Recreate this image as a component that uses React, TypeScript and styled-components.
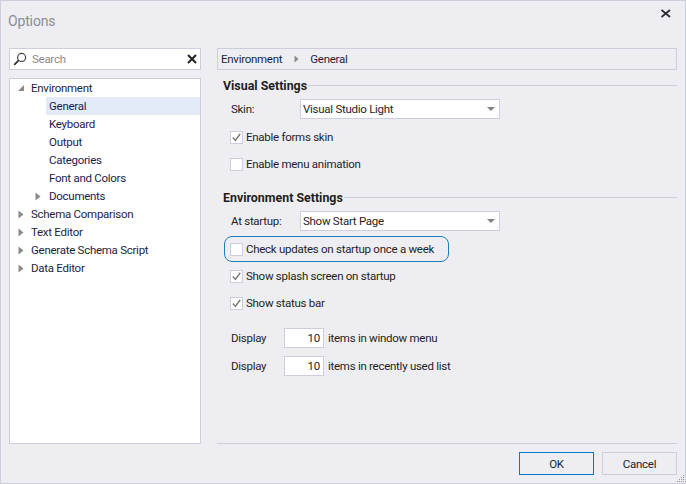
import React from "react";
import styled, { createGlobalStyle } from "styled-components";

const Global = createGlobalStyle`
  html, body { margin: 0; padding: 0; }
  body { width: 686px; height: 484px; overflow: hidden; font-family: Roboto, "Noto Sans", sans-serif; font-size: 11.5px; letter-spacing: -0.27px; color: #1e1e1e; }
`;

const Win = styled.div`
  position: relative;
  box-sizing: border-box;
  width: 686px;
  height: 484px;
  background: #eeeef2;
  border: 1px solid #cccedb;
  display: flex;
  flex-direction: column;
`;
const TitleBar = styled.div`
  height: 47px;
  flex: none;
  display: flex;
  justify-content: space-between;
  padding: 8px 14px 0 7px;
  box-sizing: border-box;
`;
const Title = styled.div`
  font-size: 14px;
  letter-spacing: -0.15px;
  line-height: 18px;
  margin-top: 3px;
  color: #8a8d99;
`;
const CloseBtn = styled.div`
  width: 10px;
  height: 10px;
  display: flex;
`;
const Main = styled.div`
  display: flex;
  flex: 1;
  padding-left: 8px;
  min-height: 0;
`;
const Left = styled.div`
  width: 192px;
  flex: none;
  display: flex;
  flex-direction: column;
  gap: 8px;
`;
const Search = styled.div`
  box-sizing: border-box;
  height: 22px;
  background: #fff;
  border: 1px solid #cccedb;
  display: flex;
  align-items: center;
  padding: 0 3px 0 3px;
`;
const SearchText = styled.div`
  flex: 1;
  margin-left: 5px;
  color: #8a8a8a;
`;
const Tree = styled.div`
  box-sizing: border-box;
  height: 366px;
  background: #fff;
  border: 1px solid #cccedb;
`;
const Row = styled.div<{ $level: number; $selected?: boolean }>`
  height: 18px;
  line-height: 18px;
  display: flex;
  align-items: center;
  box-sizing: border-box;
  color: ${(p) => (p.$level ? "#1b1b50" : "#1e1e3c")};
  margin-left: ${(p) => (p.$level ? 36 : 0)}px;
  padding-left: ${(p) => (p.$level ? 3 : 21)}px;
  background: ${(p) => (p.$selected ? "#e2ebf7" : "transparent")};
  position: relative;
`;
const Arrow = styled.svg<{ $x: number }>`
  position: absolute;
  left: ${(p) => p.$x}px;
  top: 5px;
`;
const Right = styled.div`
  margin-left: 16px;
  width: 460px;
  flex: none;
  display: flex;
  flex-direction: column;
`;
const Crumb = styled.div`
  box-sizing: border-box;
  height: 22px;
  border: 1px solid #cccedb;
  display: flex;
  align-items: center;
  padding-left: 3px;
  color: #1e1e3c;
`;
const CrumbSep = styled.svg`
  margin: 0 11px 0 12px;
`;
const Section = styled.div<{ $mt: number }>`
  display: flex;
  align-items: center;
  height: 16px;
  margin-top: ${(p) => p.$mt}px;
  font-weight: 700;
  font-size: 12.4px;
  letter-spacing: 0;
  color: #1e1e1e;
  padding-left: 6px;
  &::after {
    content: "";
    flex: 1;
    height: 1px;
    background: #cccedb;
    margin-left: 1px;
  }
`;
const FormRow = styled.div`
  display: flex;
  align-items: center;
  padding-left: 14px;
  margin-top: 6px;
`;
const Label = styled.div`
  width: 69px;
  flex: none;
`;
const Combo = styled.div`
  box-sizing: border-box;
  width: 200px;
  height: 20px;
  background: #fff;
  border: 1px solid #cccedb;
  display: flex;
  align-items: center;
  justify-content: space-between;
  padding: 0 4px 0 2px;
`;
const Caret = styled.div`
  width: 0;
  height: 0;
  border-left: 4px solid transparent;
  border-right: 4px solid transparent;
  border-top: 4px solid #808080;
`;
const Box = styled.div`
  box-sizing: border-box;
  width: 13px;
  height: 13px;
  background: #fff;
  border: 1px solid #cccedb;
  flex: none;
  display: flex;
  margin-right: 3px;
`;
const CheckRow = styled(FormRow)<{ $mt: number }>`
  height: 14px;
  margin-top: ${(p) => p.$mt}px;
  padding-left: 13px;
`;
const Highlight = styled.div`
  box-sizing: border-box;
  position: absolute;
  left: 223px;
  top: 235px;
  width: 225px;
  height: 26px;
  border: 1px solid #1c7fb8;
  border-radius: 8px;
`;
const NumRow = styled(FormRow)<{ $mt: number }>`
  height: 20px;
  margin-top: ${(p) => p.$mt}px;
`;
const NumLabel = styled.div`
  width: 53px;
  flex: none;
`;
const Num = styled.div`
  box-sizing: border-box;
  width: 40px;
  height: 20px;
  background: #fff;
  border: 1px solid #cccedb;
  text-align: right;
  line-height: 18px;
  padding-right: 3px;
  margin-right: 4px;
`;
const Footer = styled.div`
  margin-top: auto;
  border-top: 1px solid #cccedb;
  height: 40px;
  box-sizing: border-box;
  display: flex;
  justify-content: flex-end;
  gap: 8px;
  padding-top: 8px;
`;
const Button = styled.div<{ $primary?: boolean }>`
  box-sizing: border-box;
  width: 75px;
  height: 23px;
  border: 1px solid ${(p) => (p.$primary ? "#007acc" : "#cccedb")};
  display: flex;
  align-items: center;
  justify-content: center;
  background: #eeeef2;
`;
const Grip = styled.svg`
  position: absolute;
  right: 0;
  bottom: 0;
`;

const Check = ({ on }: { on?: boolean }) => (
  <Box>
    {on && (
      <svg width="11" height="11" viewBox="0 0 11 11">
        <path d="M1.8 5.6 L4.4 8.4 L9.2 1.8" fill="none" stroke="#7b7b7b" strokeWidth="1.5" />
      </svg>
    )}
  </Box>
);
const Right7 = ({ x }: { x: number }) => (
  <Arrow $x={x} width="6" height="9" viewBox="0 0 6 9">
    <path d="M0.5 0.5 L5.5 4.5 L0.5 8.5 Z" fill="#8a8a8a" />
  </Arrow>
);

export default function App() {
  return (
    <>
      <Global />
      <Win>
        <TitleBar>
          <Title>Options</Title>
          <CloseBtn>
            <svg width="10" height="10" viewBox="0 0 10 10">
              <path d="M0.5 1 L9 8 M9 1 L0.5 8" stroke="#2b2b35" strokeWidth="1.8" fill="none" />
            </svg>
          </CloseBtn>
        </TitleBar>
        <Main>
          <Left>
            <Search>
              <svg width="14" height="14" viewBox="0 0 14 14">
                <circle cx="8.6" cy="5.4" r="4" fill="none" stroke="#444" strokeWidth="1.2" />
                <path d="M5.6 8.4 L1.2 12.8" stroke="#333" strokeWidth="1.8" />
              </svg>
              <SearchText>Search</SearchText>
              <svg width="10" height="10" viewBox="0 0 10 10">
                <path d="M1 1 L9 9 M9 1 L1 9" stroke="#222" strokeWidth="2" fill="none" />
              </svg>
            </Search>
            <Tree>
              <Row $level={0}>
                <Arrow $x={7} width="8" height="8" viewBox="0 0 8 8">
                  <path d="M7 1 L7 7 L1 7 Z" fill="#8a8a8a" />
                </Arrow>
                Environment
              </Row>
              <Row $level={1} $selected>General</Row>
              <Row $level={1}>Keyboard</Row>
              <Row $level={1}>Output</Row>
              <Row $level={1}>Categories</Row>
              <Row $level={1}>Font and Colors</Row>
              <Row $level={1}>
                <Right7 x={-11} />
                Documents
              </Row>
              <Row $level={0}><Right7 x={8} />Schema Comparison</Row>
              <Row $level={0}><Right7 x={8} />Text Editor</Row>
              <Row $level={0}><Right7 x={8} />Generate Schema Script</Row>
              <Row $level={0}><Right7 x={8} />Data Editor</Row>
            </Tree>
          </Left>
          <Right>
            <Crumb>
              Environment
              <CrumbSep width="5" height="8" viewBox="0 0 5 8">
                <path d="M0.5 0.5 L4.5 4 L0.5 7.5 Z" fill="#8a8a8a" />
              </CrumbSep>
              General
            </Crumb>
            <Section $mt={7}>Visual Settings</Section>
            <FormRow>
              <Label>Skin:</Label>
              <Combo>Visual Studio Light<Caret /></Combo>
            </FormRow>
            <CheckRow $mt={11}><Check on />Enable forms skin</CheckRow>
            <CheckRow $mt={13}><Check />Enable menu animation</CheckRow>
            <Section $mt={18}>Environment Settings</Section>
            <FormRow>
              <Label>At startup:</Label>
              <Combo>Show Start Page<Caret /></Combo>
            </FormRow>
            <CheckRow $mt={11}><Check />Check updates on startup once a week</CheckRow>
            <CheckRow $mt={13}><Check on />Show splash screen on startup</CheckRow>
            <CheckRow $mt={13}><Check on />Show status bar</CheckRow>
            <NumRow $mt={18}><NumLabel>Display</NumLabel><Num>10</Num>items in window menu</NumRow>
            <NumRow $mt={8}><NumLabel>Display</NumLabel><Num>10</Num>items in recently used list</NumRow>
            <Footer>
              <Button $primary>OK</Button>
              <Button>Cancel</Button>
            </Footer>
          </Right>
        </Main>
        <Highlight />
        <Grip width="9" height="9" viewBox="0 0 9 9">
          <g fill="#8f8f9a">
            <rect x="7" y="1" width="1" height="1" />
            <rect x="5" y="3" width="1" height="1" />
            <rect x="7" y="3" width="1" height="1" />
            <rect x="3" y="5" width="1" height="1" />
            <rect x="5" y="5" width="1" height="1" />
            <rect x="7" y="5" width="1" height="1" />
            <rect x="1" y="7" width="1" height="1" />
            <rect x="3" y="7" width="1" height="1" />
            <rect x="5" y="7" width="1" height="1" />
            <rect x="7" y="7" width="1" height="1" />
          </g>
        </Grip>
      </Win>
    </>
  );
}
